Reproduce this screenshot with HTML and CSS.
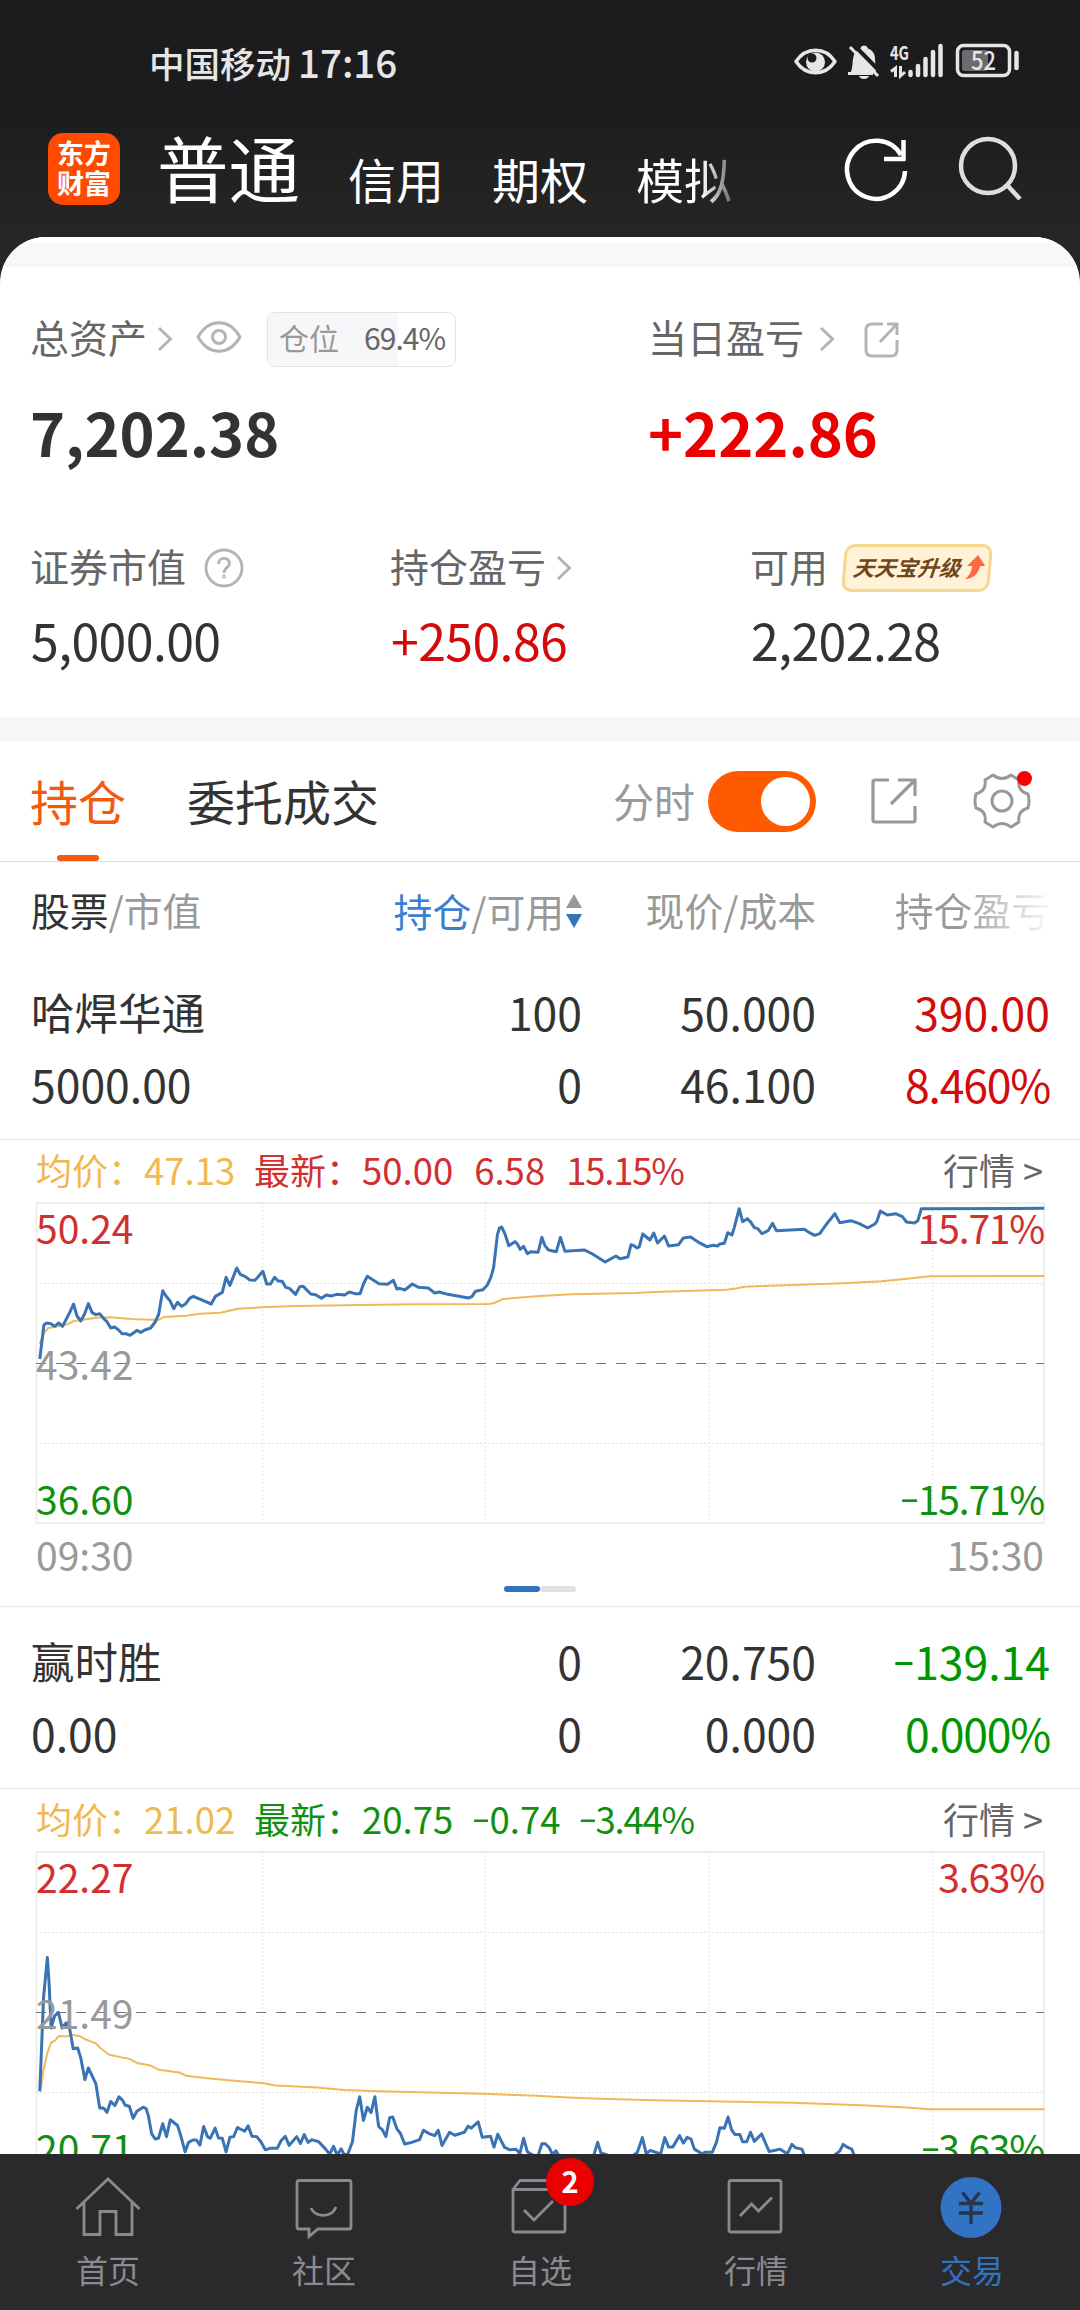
FILE: index.html
```html
<!DOCTYPE html>
<html lang="zh-CN">
<head>
    <meta charset="UTF-8">
    <meta name="viewport" content="width=device-width, initial-scale=1.0">
    <title>东方财富 - 交易</title>
    <link rel="stylesheet" href="styles.css">
</head>
<body>
<div class="app">
    <header class="header">
        <div class="status-bar">
            <div class="carrier">中国移动 <span class="clock">17:16</span></div>
            <svg class="status-icons" width="230" height="40" viewBox="0 0 230 40">
                <!-- 护眼 -->
                <path d="M6 19.500C16 4.500 35 4.500 45 19.500C35 34.500 16 34.500 6 19.500Z" fill="none" stroke="#e6e6e6" stroke-width="3.500" stroke-linejoin="round"/>
                <circle cx="25.500" cy="20" r="9.500" fill="#e6e6e6"/>
                <circle cx="22" cy="16" r="4.500" fill="#1c1c1e"/>
                <!-- 静音 -->
                <path d="M60 31C63 28 62 20 63.500 14.500C64.500 10 68 7.500 70.500 6.500C71 2.500 77 2.500 78 6.500C83 8.500 85 12 85 17L86 31Z" fill="#e6e6e6"/>
                <path d="M69 34H79C78 38 70 38 69 34Z" fill="#e6e6e6"/>
                <path d="M62.500 1.500L92 31.500" stroke="#1c1c1e" stroke-width="4"/>
                <path d="M60 5L88 34M58 31.500H83" stroke="#e6e6e6" stroke-width="3"/>
                <text x="100" y="18" class="net" textLength="19" lengthAdjust="spacingAndGlyphs">4G</text>
                <path d="M105.500 35V26L101 29.500M110.500 24V34L115 30" fill="none" stroke="#e6e6e6" stroke-width="3"/>
                <path d="M120.500 30V33M128 24V33M135.500 17V33M143 10V33M150.500 4V33" stroke="#e6e6e6" stroke-width="4.500" stroke-linecap="round"/>
                <!-- 电量 -->
                <rect x="167.500" y="3.500" width="52" height="30" rx="6" fill="none" stroke="#e6e6e6" stroke-width="3.500"/>
                <rect x="172" y="8" width="26" height="21" rx="3" fill="#6c6c6e"/>
                <path d="M226.500 11V26" stroke="#e6e6e6" stroke-width="4.500" stroke-linecap="round"/>
                <text x="181" y="27.500" class="battery" textLength="25" lengthAdjust="spacingAndGlyphs">52</text>
            </svg>
        </div>
        <div class="nav-top">
            <div class="logo">东方财富</div>
            <div class="account-tabs">
                <span class="account-tab active">普通</span>
                <span class="account-tab">信用</span>
                <span class="account-tab">期权</span>
                <span class="account-tab fade">模拟</span>
            </div>
            <div class="top-actions">
                <svg width="70" height="70" viewBox="0 0 70 70" fill="none" stroke="#fff" stroke-width="4.500">
                    <path d="M64 36A29 29 0 1 1 60 20"/>
                    <path d="M62.500 5V25M43 24H64.500"/>
                </svg>
                <svg width="70" height="70" viewBox="0 0 70 70" fill="none" stroke="#dedede" stroke-width="4.500">
                    <circle cx="32" cy="31" r="27"/>
                    <path d="M51 50L64 64"/>
                </svg>
            </div>
        </div>
    </header>

    <main class="content">
        <div class="strip"></div>

        <section class="summary">
            <div class="summary-main">
                <div class="item wide">
                    <div class="label">
                        <span class="label-text">总资产</span>
                        <svg class="chevron" width="16" height="26" viewBox="0 0 16 26"><path d="M2 2L13.500 13L2 24"/></svg>
                        <svg class="eye" width="46" height="34" viewBox="0 0 46 34" fill="none" stroke="#b4b4b4" stroke-width="3">
                            <path d="M2 17C13 -2 33 -2 44 17C33 36 13 36 2 17Z" stroke-linejoin="round"/>
                            <circle cx="23" cy="17" r="6.500"/>
                        </svg>
                        <div class="position">
                            <span class="position-bar" style="width: 69.4%"></span>
                            <span class="position-name">仓位</span>
                            <span class="position-value">69.4%</span>
                        </div>
                    </div>
                    <div class="total">7,202.38</div>
                </div>
                <div class="item">
                    <div class="label">
                        <span class="label-text">当日盈亏</span>
                        <svg class="chevron far" width="16" height="26" viewBox="0 0 16 26"><path d="M2 2L13.500 13L2 24"/></svg>
                        <svg class="share" width="36" height="36" viewBox="0 0 36 36" fill="none" stroke="#b4b4b4" stroke-width="3">
                            <path d="M19 2H8Q2 2 2 8V28Q2 34 8 34H27Q33 34 33 28V18M33 13V2H23M33 2L16 20"/>
                        </svg>
                    </div>
                    <div class="total red-strong">+222.86</div>
                </div>
            </div>
            <div class="summary-sub">
                <div class="item">
                    <div class="label">
                        <span class="label-text">证券市值</span>
                        <svg class="help" width="40" height="40" viewBox="0 0 40 40" fill="none" stroke="#b4b4b4" stroke-width="2.800">
                            <circle cx="20" cy="20" r="18"/>
                            <path d="M14.500 16C14.500 8.500 25.500 8.500 25.500 15.500C25.500 19.500 20 19.500 20 25"/>
                            <circle cx="20" cy="28.500" r="0.600"/>
                        </svg>
                    </div>
                    <div class="amount">5,000.00</div>
                </div>
                <div class="item">
                    <div class="label">
                        <span class="label-text">持仓盈亏</span>
                        <svg class="chevron" width="16" height="26" viewBox="0 0 16 26"><path d="M2 2L13.500 13L2 24"/></svg>
                    </div>
                    <div class="amount red">+250.86</div>
                </div>
                <div class="item">
                    <div class="label">
                        <span class="label-text">可用</span>
                        <div class="upgrade">
                            <span class="upgrade-text">天天宝升级</span>
                            <svg width="20" height="28" viewBox="0 0 20 28"><path d="M12 1L20 12H15C14 19 9 25 1 25C5 22 7 17 7 12H2Z" fill="#ff6a3c"/></svg>
                        </div>
                    </div>
                    <div class="amount">2,202.28</div>
                </div>
            </div>
        </section>

        <div class="divider"></div>

        <div class="tabs">
            <div class="tab active">持仓</div>
            <div class="tab">委托成交</div>
            <div class="tools">
                <span class="tools-text">分时</span>
                <span class="switch"></span>
                <svg class="tool-share" width="48" height="48" viewBox="0 0 48 48" fill="none" stroke="#999" stroke-width="3.200">
                    <path d="M19 3H5Q3 3 3 5V43Q3 45 5 45H43Q45 45 45 43V29M45 19V3H28M45 3L21 27"/>
                </svg>
                <div class="gear">
                    <svg width="58" height="58" viewBox="0 0 58 58" fill="none" stroke="#999" stroke-width="3" stroke-linejoin="round">
                        <path d="M20 3Q29 10 38 3L46 8Q44 19 55 22Q57 29 55 36Q44 39 46 50L38 55Q29 48 20 55L12 50Q14 39 3 36Q1 29 3 22Q14 19 12 8Z"/>
                        <circle cx="29" cy="29" r="10"/>
                    </svg>
                    <i class="dot"></i>
                </div>
            </div>
        </div>

        <div class="row table-head">
            <div><b>股票</b>/市值</div>
            <div class="sortable"><em>持仓</em>/可用
                <svg width="18" height="36" viewBox="0 0 18 36"><path d="M9 1L17 15H1Z" fill="#999"/><path d="M1 21H17L9 35Z" fill="#3273bd"/></svg>
            </div>
            <div>现价/成本</div>
            <div class="head-fade">持仓盈亏</div>
        </div>

        <div class="row stock">
            <div><span class="name">哈焊华通</span><span>5000.00</span></div>
            <div><span>100</span><span>0</span></div>
            <div><span>50.000</span><span>46.100</span></div>
            <div class="red"><span>390.00</span><span class="pct">8.460%</span></div>
        </div>
        <div class="trend">
            <div class="quote up">
                <span class="avg">均价：</span><span class="avg num-avg">47.13</span>
                <span class="cjk">最新：</span><span class="num-last">50.00</span><span>6.58</span><span class="pct">15.15%</span>
                <span class="more">行情 &gt;</span>
            </div>
            <div class="chart">
                <svg class="plot" width="1009" height="322" viewBox="0 0 1009 322" fill="none">
                    <rect x="0.500" y="1" width="1007.500" height="320" stroke="#eee" stroke-width="2"/>
                    <path class="grid" d="M0 81.500H1008M0 241.500H1008M226.500 0V322M449.500 0V322M673.500 0V322M896.500 0V322"/>
                    <path class="mid" d="M0 161.500H1008"/>
                    <g transform="scale(0.34435 0.33333) translate(-104 -214)">
                        <polyline class="avg-line" points="115,640 122,620 130,603 140,592 185,584 200,578 214,571 240,567 280,561 320,560 380,565 460,568 475,559 540,555 580,549 640,546 690,534 760,530 860,526 1000,524 1200,521 1420,520 1435,517 1460,505 1568,496 1660,491 1840,487 1920,483 2110,477 2140,473 2160,468 2300,463 2450,458 2560,452 2620,446 2700,437 3032,436"/>
                        <polyline class="price-line" points="115,685 127,583 135,577 147,579 158,587 170,577 181,587 202,545 213,520 223,556 234,571 245,550 256,519 267,546 278,552 289,549 300,563 310,573 321,592 332,589 343,597 354,609 365,609 377,614 387,607 397,599 408,605 420,598 437,592 450,574 460,552 472,480 482,497 493,510 504,534 515,515 527,527 538,520 550,503 561,497 613,520 625,497 645,485 656,440 667,464 687,412 697,431 712,438 725,448 740,449 763,422 774,460 785,460 797,440 807,451 819,452 829,470 840,473 858,491 870,468 880,467 902,490 916,492 933,503 947,493 960,496 978,491 1000,493 1014,484 1030,489 1045,489 1055,460 1066,437 1100,459 1125,461 1142,449 1152,475 1160,473 1175,478 1197,460 1215,470 1243,472 1262,487 1275,484 1300,491 1360,502 1370,498 1380,482 1402,477 1414,464 1425,440 1433,410 1444,312 1450,292 1456,289 1466,310 1477,345 1495,333 1502,340 1510,356 1520,347 1531,369 1540,363 1562,365 1573,320 1582,345 1592,358 1615,363 1627,320 1640,362 1697,358 1720,370 1757,394 1788,376 1800,384 1823,379 1832,342 1840,345 1850,352 1856,348 1866,310 1887,328 1898,307 1909,337 1929,316 1941,346 1970,342 1984,322 2005,319 2030,336 2052,348 2070,344 2083,346 2090,340 2103,338 2113,306 2125,313 2132,290 2146,234 2156,273 2170,264 2180,275 2190,291 2200,294 2212,309 2230,300 2243,278 2254,300 2335,296 2350,306 2365,314 2380,309 2400,280 2424,249 2438,276 2470,270 2495,279 2519,292 2540,280 2546,272 2556,241 2576,253 2600,249 2620,258 2632,274 2655,277 2665,270 2675,234 3032,233"/>
                    </g>
                </svg>
                <div class="scale">
                    <div><span class="hi">50.24</span><span class="hi pct">15.71%</span></div>
                    <div><span class="base">43.42</span></div>
                    <div><span class="lo">36.60</span><span class="lo pct"><i class="minus">−</i>15.71%</span></div>
                </div>
            </div>
            <div class="time"><span>09:30</span><span>15:30</span></div>
            <div class="pager"><i class="on"></i><i></i></div>
        </div>

        <div class="row stock">
            <div><span class="name">赢时胜</span><span>0.00</span></div>
            <div><span>0</span><span>0</span></div>
            <div><span>20.750</span><span>0.000</span></div>
            <div class="green"><span><i class="minus">−</i>139.14</span><span class="pct">0.000%</span></div>
        </div>
        <div class="trend">
            <div class="quote down">
                <span class="avg">均价：</span><span class="avg num-avg">21.02</span>
                <span class="cjk">最新：</span><span class="num-last">20.75</span><span><i class="minus">−</i>0.74</span><span class="pct"><i class="minus">−</i>3.44%</span>
                <span class="more">行情 &gt;</span>
            </div>
            <div class="chart">
                <svg class="plot" width="1009" height="322" viewBox="0 0 1009 322" fill="none">
                    <rect x="0.500" y="1" width="1007.500" height="320" stroke="#eee" stroke-width="2"/>
                    <path class="grid" d="M0 81.500H1008M0 241.500H1008M226.500 0V322M449.500 0V322M673.500 0V322M896.500 0V322"/>
                    <path class="mid" d="M0 161.500H1008"/>
                    <g transform="scale(0.34435 0.33803) translate(-104 -208)">
                        <polyline class="avg-line" points="118,910 125,860 137,805 148,775 160,768 170,755 190,757 210,752 230,755 245,764 278,777 290,790 315,810 345,817 375,823 400,836 435,842 460,855 520,863 540,873 600,880 670,887 765,895 800,902 920,908 1000,915 1100,919 1400,926 1560,932 1650,937 1740,941 1900,945 2300,953 2500,960 2620,966 2700,972 3032,972"/>
                        <polyline class="price-line" points="115,919 126,640 137,523 142,600 148,732 158,696 169,685 180,732 192,716 202,735 212,793 225,791 234,820 246,884 256,850 267,873 278,897 289,968 300,968 310,981 321,949 333,961 345,935 355,945 363,960 375,963 386,999 397,978 415,966 424,970 430,990 440,1045 450,1060 460,1057 472,1015 483,1053 494,1003 515,1020 523,1045 537,1098 547,1070 560,1063 570,1063 580,1078 591,1023 602,1053 610,1058 624,1028 634,1057 645,1058 656,1098 667,1055 678,1053 689,1026 710,1037 720,1021 731,1052 745,1053 757,1068 770,1092 785,1087 805,1087 815,1066 828,1052 839,1079 861,1053 872,1073 883,1047 894,1070 905,1062 925,1068 945,1090 957,1105 968,1082 979,1108 990,1089 1000,1108 1010,1103 1023,1068 1034,975 1044,935 1055,1005 1066,966 1077,982 1088,935 1099,1023 1110,1033 1120,1053 1131,997 1140,995 1152,1030 1162,1043 1175,1075 1195,1070 1218,1062 1229,1034 1245,1044 1262,1050 1272,1034 1283,1079 1305,1040 1320,1049 1348,1040 1359,1022 1368,1028 1388,1009 1400,1055 1424,1052 1434,1084 1445,1046 1465,1085 1480,1092 1498,1090 1509,1103 1520,1058 1531,1098 1545,1107 1562,1110 1573,1074 1583,1074 1594,1085 1604,1106 1614,1095 1625,1114 1722,1114 1735,1070 1745,1102 1760,1106 1780,1114 1840,1108 1850,1100 1865,1056 1876,1103 1888,1094 1918,1104 1930,1056 1941,1084 1953,1084 1973,1050 1984,1072 1995,1055 2006,1060 2016,1090 2038,1104 2048,1099 2068,1099 2080,1070 2090,1027 2103,1028 2114,995 2124,1033 2134,1047 2148,1047 2156,1068 2168,1068 2179,1040 2190,1067 2211,1045 2233,1097 2248,1094 2265,1090 2286,1104 2299,1076 2310,1086 2328,1090 2338,1114 2415,1114 2425,1106 2438,1096 2448,1076 2461,1085 2473,1090 2482,1114"/>
                    </g>
                </svg>
                <div class="scale">
                    <div><span class="hi">22.27</span><span class="hi pct">3.63%</span></div>
                    <div><span class="base">21.49</span></div>
                    <div><span class="lo">20.71</span><span class="lo pct"><i class="minus">−</i>3.63%</span></div>
                </div>
            </div>
        </div>
    </main>

    <nav class="tab-bar">
        <div class="tab-item">
            <svg width="68" height="62" viewBox="0 0 68 62"><path d="M2.500 33L34 3L65.500 33M10 27V58.500H26V35.500H42V58.500H58V27"/></svg>
            <span>首页</span>
        </div>
        <div class="tab-item">
            <svg width="68" height="62" viewBox="0 0 68 62"><path d="M9 4.500H59Q61 4.500 61 6.500V51Q61 53 59 53H28L19 60.500V53H9Q7 53 7 51V6.500Q7 4.500 9 4.500ZM21 32C25 42 42 42 46 31"/></svg>
            <span>社区</span>
        </div>
        <div class="tab-item">
            <svg width="68" height="62" viewBox="0 0 68 62"><path d="M7 13.500L14 4.500H52L59 13.500V54Q59 56 57 56H9Q7 56 7 54V13.500H59M18 34L28 44L47 25"/></svg>
            <i class="badge">2</i>
            <span>自选</span>
        </div>
        <div class="tab-item">
            <svg width="68" height="62" viewBox="0 0 68 62"><path d="M9 4.500H57Q59 4.500 59 6.500V54Q59 56 57 56H9Q7 56 7 54V6.500Q7 4.500 9 4.500ZM18 40L29.500 28L36.500 35L50 21.500"/></svg>
            <span>行情</span>
        </div>
        <div class="tab-item current">
            <svg width="68" height="62" viewBox="0 0 68 62"><circle cx="33" cy="31.500" r="30.500"/><path class="yen" d="M24.500 16.500L33 27.500L41.500 16.500M33 27.500V48M21 27.500H45M21 37H45"/></svg>
            <span>交易</span>
        </div>
    </nav>
</div>
</body>
</html>
```
FILE: styles.css
```css
* {
    box-sizing: border-box;
}

body {
    margin: 0;
    background: #fff;
    color: #333;
    font-family: "Noto Sans CJK SC", "Noto Sans", sans-serif;
}

svg {
    display: block;
    flex: none;
    overflow: visible;
}

.app {
    display: flex;
    flex-direction: column;
    width: 1080px;
    height: 2310px;
    overflow: hidden;
    background: #262626;
}

/* header */
.header {
    height: 237px;
    flex: none;
    background: linear-gradient(#1c1c1e 45%, #262626);
}

.status-bar {
    display: flex;
    justify-content: space-between;
    align-items: center;
    height: 124px;
    padding: 0 55px 0 149px;
    color: #e6e6e6;
}

.carrier {
    padding-bottom: 3px;
    font-size: 35.5px;
    font-weight: 500;
    white-space: nowrap;
}

.clock {
    font-size: 38.5px;
    margin-left: -1px;
}

.status-icons {
    margin-right: 5px;
}

.net {
    font-size: 19px;
    font-weight: 700;
    fill: #e6e6e6;
}

.battery {
    font-size: 25px;
    font-weight: 500;
    fill: #e6e6e6;
}

.nav-top {
    display: flex;
    align-items: center;
    height: 90px;
    padding: 0 54px 0 48px;
}

.logo {
    width: 72px;
    height: 72px;
    padding: 5px 9px;
    border-radius: 15px;
    background: #ff4a00;
    color: #fff;
    font-size: 27px;
    font-weight: 700;
    line-height: 30px;
    word-break: break-all;
}

.account-tabs {
    display: flex;
    align-items: center;
    gap: 48px;
    margin-left: 37px;
    color: #fff;
    white-space: nowrap;
}

.account-tab {
    font-size: 48px;
    line-height: 60px;
    margin-top: 18px;
}

.account-tab.active {
    font-size: 71.5px;
    line-height: 80px;
    margin-top: -7px;
}

.account-tab.fade {
    color: transparent;
    background: linear-gradient(to right, #fff 68%, #555 105%);
    -webkit-background-clip: text;
    background-clip: text;
}

.top-actions {
    display: flex;
    gap: 45px;
    margin: 2px 0 0 auto;
}

/* assets */
.content {
    flex: 1;
    min-height: 0;
    overflow: hidden;
    background: #fff;
    border-radius: 46px 46px 0 0;
}

.strip {
    height: 30px;
    border-top: 6px solid #fff;
    background: #f8f8fa;
}

.summary {
    height: 450px;
    padding: 45px 30px 0;
}

.summary-main,
.summary-sub {
    display: flex;
}

.summary-main .wide {
    width: 618px;
}

.summary-sub {
    margin-top: 77px;
}

.summary-sub .item {
    width: 360px;
    flex: none;
}

.label {
    display: flex;
    align-items: center;
    height: 54px;
    color: #666;
    font-size: 39px;
    white-space: nowrap;
}

.summary-sub .label {
    height: 50px;
}

.label-text {
    line-height: 44px;
    padding-bottom: 6px;
}

.chevron {
    margin-left: 10px;
    fill: none;
    stroke: #b4b4b4;
    stroke-width: 3;
}

.chevron.far {
    margin-left: 15px;
}

.eye {
    margin: -4px 0 0 23px;
}

.share {
    margin: 2px 0 0 29px;
}

.help {
    margin-left: 18px;
}

.position {
    position: relative;
    display: flex;
    align-items: center;
    justify-content: space-between;
    width: 189px;
    height: 55px;
    margin-left: 25px;
    padding: 0 10px 4px 11px;
    border: 1px solid #e2e2e5;
    border-radius: 8px;
    overflow: hidden;
    font-size: 30px;
    line-height: 40px;
}

.position-bar {
    position: absolute;
    left: 0;
    top: 0;
    bottom: 0;
    background: #f7f7fa;
}

.position-name {
    position: relative;
    color: #999;
}

.position-value {
    position: relative;
    letter-spacing: -1px;
}

.total {
    margin-top: 30px;
    font-size: 59.5px;
    font-weight: 700;
    line-height: 70px;
}

.amount {
    margin: 16px 0 0 1px;
    font-size: 50px;
    letter-spacing: -0.6px;
    line-height: 60px;
}

.red-strong {
    color: #eb0000;
}

.red {
    color: #d20a0a;
}

.green {
    color: #009600;
}

.upgrade {
    display: flex;
    align-items: center;
    width: 148px;
    height: 48px;
    margin-left: 15px;
    padding-left: 7px;
    border: 3px solid #f5d88e;
    border-radius: 10px;
    background: #fff2d6;
    transform: skewX(-5deg);
}

.upgrade-text {
    margin-right: 4px;
    color: #71441d;
    font-size: 21.5px;
    font-weight: 700;
    font-style: italic;
    line-height: 30px;
    padding-bottom: 3px;
}

.divider {
    height: 24px;
    background: #f7f7fa;
}

/* tabs */
.tabs {
    display: flex;
    height: 121px;
    padding-left: 30px;
    border-bottom: 1px solid #ddd;
}

.tab {
    position: relative;
    margin-right: 61px;
    font-size: 48px;
    line-height: 118px;
}

.tab.active {
    color: #f25a0f;
}

.tab.active::after {
    content: "";
    position: absolute;
    left: 27px;
    bottom: 0;
    width: 42px;
    height: 6px;
    border-radius: 3px;
    background: #f25a0f;
}

.tools {
    display: flex;
    align-items: center;
    margin-left: auto;
    padding-right: 49px;
}

.tools-text {
    color: #999;
    font-size: 41px;
    line-height: 50px;
    padding-bottom: 3px;
}

.switch {
    width: 108px;
    height: 61px;
    margin-left: 13px;
    padding: 6px;
    border-radius: 31px;
    background: #ff5a00;
}

.switch::after {
    content: "";
    display: block;
    width: 49px;
    height: 49px;
    margin-left: auto;
    border-radius: 50%;
    background: #fff;
}

.tool-share {
    margin-left: 54px;
}

.gear {
    position: relative;
    margin-left: 55px;
}

.dot {
    position: absolute;
    right: -1px;
    top: -1px;
    width: 15px;
    height: 15px;
    border-radius: 50%;
    background: #fa0000;
}

/* holdings */
.row {
    display: grid;
    grid-template-columns: 300px 251px 234px 234px;
    padding: 0 30px 0 31px;
    text-align: right;
    white-space: nowrap;
}

.row > div:first-child {
    text-align: left;
}

.table-head {
    height: 96px;
    color: #999;
    font-size: 38.8px;
    line-height: 94px;
}

.table-head b {
    color: #333;
    font-weight: 400;
}

.table-head em {
    color: #3c7ed0;
    font-style: normal;
}

.sortable {
    display: flex;
    align-items: center;
    justify-content: flex-end;
}

.sortable svg {
    margin: 2px -1px 0 1px;
}

.head-fade {
    color: transparent;
    background: linear-gradient(to right, #999 60%, #f4f4f4 98%);
    -webkit-background-clip: text;
    background-clip: text;
}

.stock {
    height: 181px;
    padding-top: 18px;
    font-size: 44.5px;
    line-height: 72px;
}

.stock span {
    display: block;
}

.stock .name {
    font-size: 43.5px;
}

.pct {
    letter-spacing: -1.2px;
}

.minus {
    display: inline-block;
    font-style: normal;
    transform: scaleX(0.8);
    transform-origin: right;
    margin-left: -5px;
}

.trend {
    height: 468px;
    border-top: 1px solid #eaeaea;
    border-bottom: 1px solid #eaeaea;
}

.quote {
    display: flex;
    align-items: center;
    height: 62px;
    padding: 0 37px 4px 36px;
    font-size: 36.5px;
    white-space: nowrap;
}

.quote span {
    margin-right: 21px;
}

.quote .avg,
.quote .cjk {
    color: #f0b94f;
    font-size: 36px;
    margin-right: 0;
}

.quote .num-avg {
    width: 91px;
    margin-right: 19px;
    font-size: 36.5px;
}

.quote .cjk {
    color: inherit;
}

.quote.up {
    color: #d03030;
}

.quote.down {
    color: #109010;
}

.quote .more {
    margin: 0 0 0 auto;
    color: #666;
    font-size: 36px;
}

.chart {
    position: relative;
    height: 322px;
    padding-left: 36px;
}

.grid {
    stroke: #e4e4e4;
    stroke-dasharray: 2 2;
}

.mid {
    stroke: #777;
    stroke-dasharray: 10 10;
}

.avg-line,
.price-line {
    vector-effect: non-scaling-stroke;
    stroke-linejoin: round;
}

.avg-line {
    stroke: #edb95a;
    stroke-width: 2;
}

.price-line {
    stroke: #3a73b4;
    stroke-width: 3;
}

.scale {
    position: absolute;
    inset: 0 36px 0 36px;
    display: flex;
    flex-direction: column;
    justify-content: space-between;
    font-size: 39px;
    line-height: 51px;
}

.scale div {
    display: flex;
    justify-content: space-between;
}

.hi {
    color: #d03030;
}

.base {
    color: #999;
}

.lo {
    color: #109010;
}

.time {
    display: flex;
    justify-content: space-between;
    padding: 0 36px;
    color: #999;
    font-size: 39px;
    line-height: 60px;
}

.pager {
    display: flex;
    justify-content: center;
    margin-top: 2px;
}

.pager i {
    width: 36px;
    height: 6px;
    border-radius: 3px;
    background: #e2e2e2;
}

.pager .on {
    background: #3273bd;
}

/* bottom bar */
.tab-bar {
    display: flex;
    flex: none;
    height: 156px;
    background: #2a2a2c;
}

.tab-item {
    position: relative;
    display: flex;
    flex: 1;
    flex-direction: column;
    align-items: center;
    padding-top: 22px;
    color: #8b8b8f;
    font-size: 32px;
    line-height: 44px;
}

.tab-item svg {
    margin-bottom: 9px;
    fill: none;
    stroke: #8b8b8f;
    stroke-width: 2.8;
}

.tab-item.current {
    color: #3273bd;
}

.tab-item.current svg {
    fill: #3273c4;
    stroke: none;
}

.tab-item .yen {
    fill: none;
    stroke: #26364c;
    stroke-width: 3.4;
}

.badge {
    position: absolute;
    left: 114px;
    top: 4px;
    width: 48px;
    height: 48px;
    border-radius: 50%;
    background: #eb0000;
    color: #fff;
    font-size: 29px;
    font-weight: 700;
    font-style: normal;
    line-height: 45px;
    text-align: center;
}
```
